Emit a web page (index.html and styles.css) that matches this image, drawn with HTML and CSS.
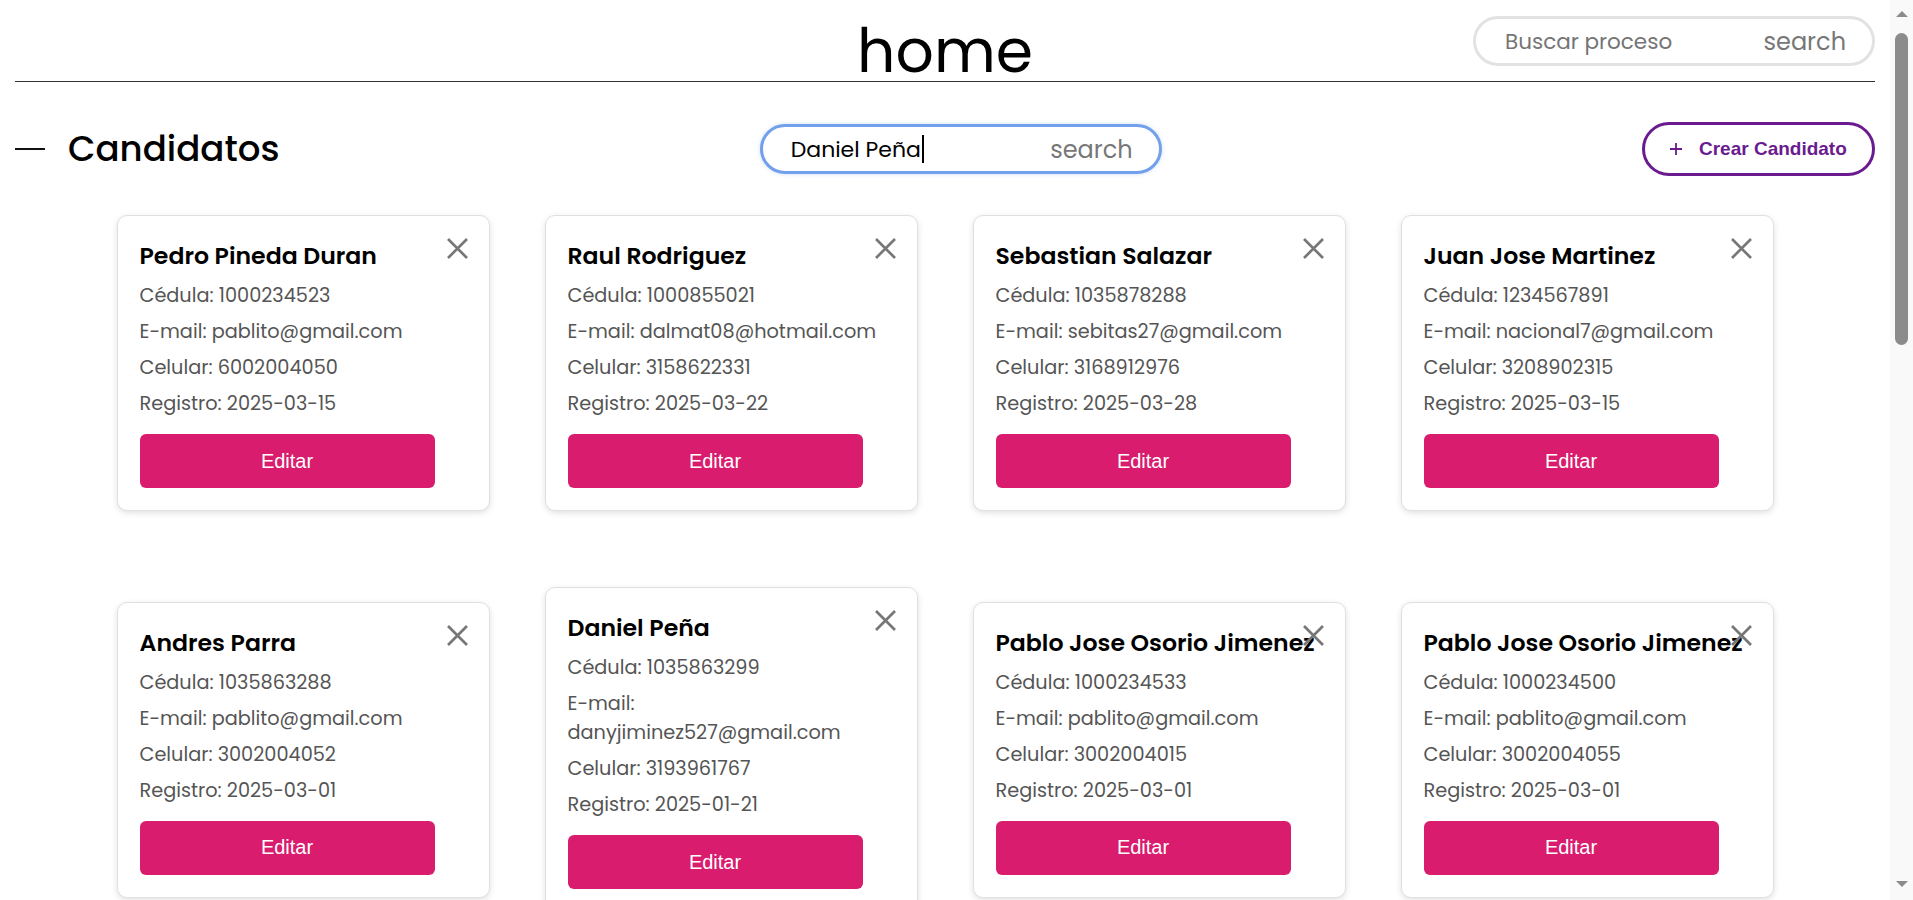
FILE: index.html
```html
<!DOCTYPE html>
<html lang="es">
<head>
<meta charset="utf-8">
<title>home</title>
<link rel="stylesheet" href="styles.css">
</head>
<body>
<header class="topbar">
  <div class="topbar-side"></div>
  <h1 class="page-title">home</h1>
  <div class="topbar-side topbar-side--end">
    <div class="search search--global">
      <span class="search-text search-text--placeholder">Buscar proceso</span>
      <span class="search-icon">search</span>
    </div>
  </div>
</header>

<section class="toolbar">
  <div class="section-title">
    <span class="dash"></span>
    <h2>Candidatos</h2>
  </div>
  <div class="search search--active">
    <span class="search-text">Daniel Peña<span class="caret"></span></span>
    <span class="search-icon">search</span>
  </div>
  <button class="btn-create">
    <svg class="plus" width="14" height="14" viewBox="0 0 14 14"><path d="M7 1v12M1 7h12" stroke="currentColor" stroke-width="1.8" fill="none"/></svg>
    <span>Crear Candidato</span>
  </button>
</section>

<main class="cards">
  <article class="card">
    <svg class="close" viewBox="0 0 21 21"><path d="M1 1l19 19M20 1L1 20"/></svg>
    <h3>Pedro Pineda Duran</h3>
    <p>Cédula: 1000234523</p>
    <p>E-mail: pablito@gmail.com</p>
    <p>Celular: 6002004050</p>
    <p>Registro: 2025-03-15</p>
    <button class="btn-edit">Editar</button>
  </article>
  <article class="card">
    <svg class="close" viewBox="0 0 21 21"><path d="M1 1l19 19M20 1L1 20"/></svg>
    <h3>Raul Rodriguez</h3>
    <p>Cédula: 1000855021</p>
    <p>E-mail: dalmat08@hotmail.com</p>
    <p>Celular: 3158622331</p>
    <p>Registro: 2025-03-22</p>
    <button class="btn-edit">Editar</button>
  </article>
  <article class="card">
    <svg class="close" viewBox="0 0 21 21"><path d="M1 1l19 19M20 1L1 20"/></svg>
    <h3>Sebastian Salazar</h3>
    <p>Cédula: 1035878288</p>
    <p>E-mail: sebitas27@gmail.com</p>
    <p>Celular: 3168912976</p>
    <p>Registro: 2025-03-28</p>
    <button class="btn-edit">Editar</button>
  </article>
  <article class="card">
    <svg class="close" viewBox="0 0 21 21"><path d="M1 1l19 19M20 1L1 20"/></svg>
    <h3>Juan Jose Martinez</h3>
    <p>Cédula: 1234567891</p>
    <p>E-mail: nacional7@gmail.com</p>
    <p>Celular: 3208902315</p>
    <p>Registro: 2025-03-15</p>
    <button class="btn-edit">Editar</button>
  </article>
  <article class="card">
    <svg class="close" viewBox="0 0 21 21"><path d="M1 1l19 19M20 1L1 20"/></svg>
    <h3>Andres Parra</h3>
    <p>Cédula: 1035863288</p>
    <p>E-mail: pablito@gmail.com</p>
    <p>Celular: 3002004052</p>
    <p>Registro: 2025-03-01</p>
    <button class="btn-edit">Editar</button>
  </article>
  <article class="card">
    <svg class="close" viewBox="0 0 21 21"><path d="M1 1l19 19M20 1L1 20"/></svg>
    <h3>Daniel Peña</h3>
    <p>Cédula: 1035863299</p>
    <p>E-mail: danyjiminez527@gmail.com</p>
    <p>Celular: 3193961767</p>
    <p>Registro: 2025-01-21</p>
    <button class="btn-edit">Editar</button>
  </article>
  <article class="card">
    <svg class="close" viewBox="0 0 21 21"><path d="M1 1l19 19M20 1L1 20"/></svg>
    <h3>Pablo Jose Osorio Jimenez</h3>
    <p>Cédula: 1000234533</p>
    <p>E-mail: pablito@gmail.com</p>
    <p>Celular: 3002004015</p>
    <p>Registro: 2025-03-01</p>
    <button class="btn-edit">Editar</button>
  </article>
  <article class="card">
    <svg class="close" viewBox="0 0 21 21"><path d="M1 1l19 19M20 1L1 20"/></svg>
    <h3>Pablo Jose Osorio Jimenez</h3>
    <p>Cédula: 1000234500</p>
    <p>E-mail: pablito@gmail.com</p>
    <p>Celular: 3002004055</p>
    <p>Registro: 2025-03-01</p>
    <button class="btn-edit">Editar</button>
  </article>
</main>

<div class="scrollbar" aria-hidden="true">
  <span class="scrollbar-arrow scrollbar-arrow--up"></span>
  <span class="scrollbar-thumb"></span>
  <span class="scrollbar-arrow scrollbar-arrow--down"></span>
</div>
</body>
</html>
```

FILE: styles.css
```css
* { box-sizing: border-box; }

html, body {
  margin: 0;
  padding: 0;
  background: #fff;
}

body {
  font-family: "Poppins", "Inter", "Noto Sans", sans-serif;
  color: #000;
  padding: 0 38px 0 15px;
}

/* ---------- top bar ---------- */
.topbar {
  display: grid;
  grid-template-columns: 1fr auto 1fr;
  height: 82px;
  border-bottom: 1px solid #333;
}

.topbar-side--end {
  display: flex;
  justify-content: flex-end;
  align-items: flex-start;
}

.page-title {
  margin: 21px 0 0;
  font-size: 60px;
  line-height: 60px;
  font-weight: 400;
}

/* ---------- search boxes ---------- */
.search {
  width: 402px;
  height: 50px;
  border-radius: 25px;
  border: 3px solid #e2e2e2;
  display: flex;
  align-items: center;
  justify-content: space-between;
  padding: 0 26px 0 29px;
  background: #fff;
}

.search--global {
  margin-top: 16px;
}

.search--active {
  border-color: #72a0ea;
  box-shadow: 0 0 4px rgba(114, 160, 234, 0.35);
  padding-left: 28px;
}

.search-text {
  font-size: 22px;
  color: #000;
  display: flex;
  align-items: center;
}

.search-text--placeholder {
  font-size: 21.5px;
  color: #757575;
}

.caret {
  display: inline-block;
  width: 2px;
  height: 28px;
  background: #000;
  margin-left: 1px;
}

.search-icon {
  font-size: 24px;
  color: #777;
}

/* ---------- toolbar ---------- */
.toolbar {
  display: flex;
  justify-content: space-between;
  align-items: center;
  margin-top: 40px;
  height: 54px;
}

.section-title {
  display: flex;
  align-items: center;
  gap: 23px;
}

.dash {
  display: block;
  width: 30px;
  height: 2px;
  background: #111;
}

.section-title h2 {
  margin: 0;
  font-size: 35.6px;
  font-weight: 500;
  line-height: 1.2;
}

.btn-create {
  width: 233px;
  height: 54px;
  border: 3px solid #6a1b8f;
  border-radius: 27px;
  background: #fff;
  color: #6a1b8f;
  display: flex;
  align-items: center;
  padding: 0 0 0 24px;
  gap: 16px;
  font-family: "Liberation Sans", Arial, sans-serif;
  font-weight: 700;
  font-size: 19px;
  cursor: pointer;
}

.plus { flex: none; }

/* ---------- cards ---------- */
.cards {
  display: flex;
  flex-wrap: wrap;
  justify-content: center;
  align-items: center;
  gap: 76px 55px;
  margin-top: 39px;
  padding-bottom: 60px;
}

.card {
  position: relative;
  width: 373px;
  border: 1px solid #e0e0e0;
  border-radius: 10px;
  background: #fff;
  box-shadow: 0 2px 6px rgba(0, 0, 0, 0.12);
  padding: 25px 22px 22px;
}

.card h3 {
  margin: 0 0 10px;
  font-size: 23.6px;
  line-height: 30px;
  font-weight: 600;
  color: #000;
}

.card p {
  margin: 7px 0 0;
  font-size: 19.3px;
  line-height: 29px;
  color: #555;
}

.card h3 + p { margin-top: 0; }

.close {
  position: absolute;
  top: 22px;
  right: 21px;
  width: 21px;
  height: 21px;
  stroke: #777;
  stroke-width: 2.7;
  fill: none;
}

.btn-edit {
  display: block;
  margin-top: 16px;
  width: 295px;
  height: 54px;
  border: none;
  border-radius: 6px;
  background: #d91c6d;
  color: #fff;
  font-family: "Liberation Sans", Arial, sans-serif;
  font-size: 20px;
  cursor: pointer;
}

/* ---------- browser scrollbar (as in the capture) ---------- */
.scrollbar {
  position: fixed;
  top: 0;
  right: 0;
  width: 23px;
  height: 100vh;
  background: #f9f9f9;
  display: flex;
  flex-direction: column;
  align-items: center;
  padding: 11px 0 13px;
}

.scrollbar-arrow {
  width: 0;
  height: 0;
  border-left: 6px solid transparent;
  border-right: 6px solid transparent;
}

.scrollbar-arrow--up {
  border-bottom: 6px solid #8b8b8b;
}

.scrollbar-arrow--down {
  border-top: 6px solid #8b8b8b;
  margin-top: auto;
}

.scrollbar-thumb {
  width: 13px;
  height: 312px;
  margin-top: 16px;
  border-radius: 7px;
  background: #8b8b8b;
}
```
